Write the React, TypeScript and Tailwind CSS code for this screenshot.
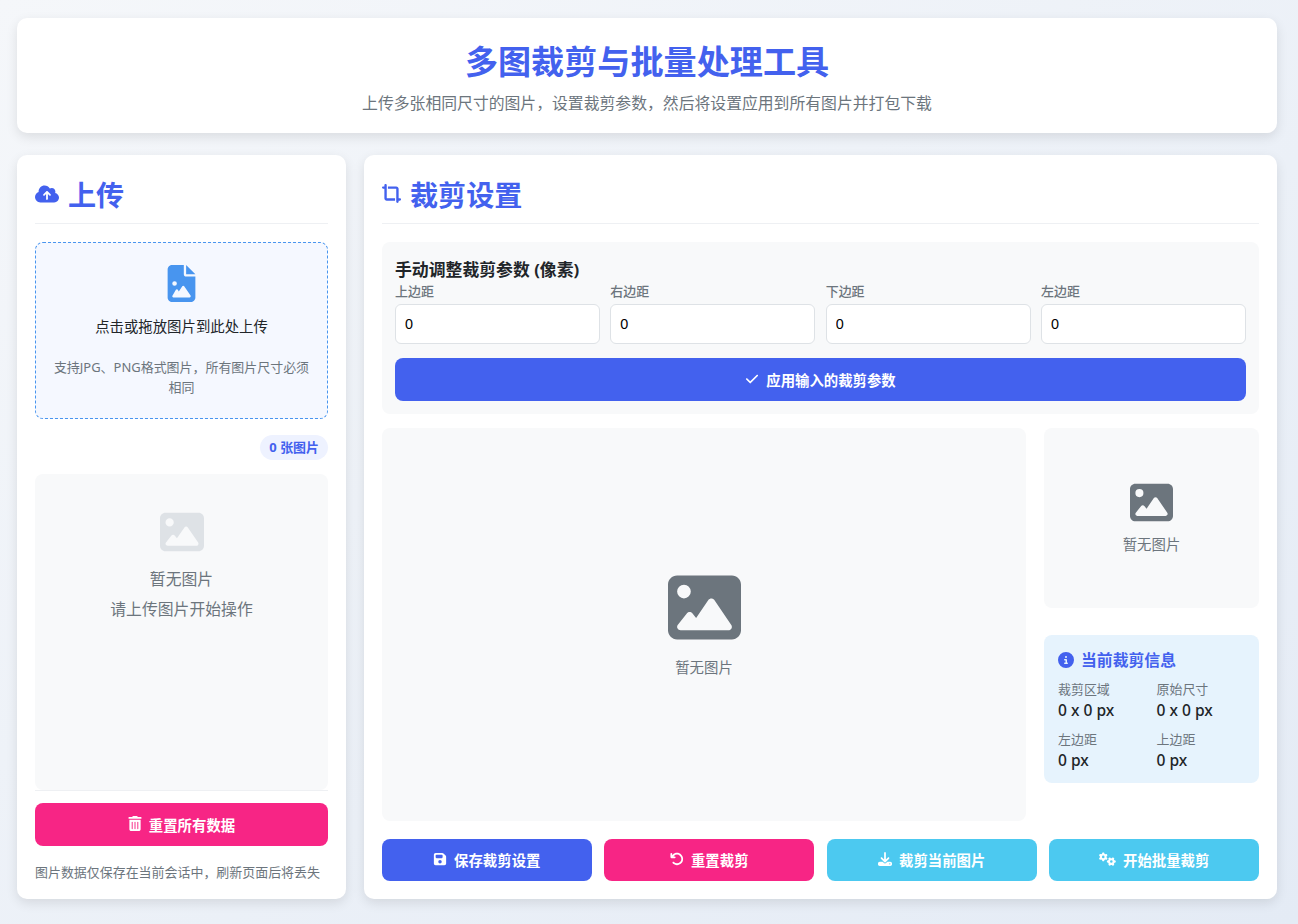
import { FaArrowRotateLeft, FaCheck, FaCircleInfo, FaCloudArrowUp, FaCropSimple, FaDownload, FaFileImage, FaFloppyDisk, FaGears, FaImage, FaTrashCan } from "react-icons/fa6"
import type { ReactNode } from "react"

const font = "font-['Noto_Sans','Noto_Sans_CJK_SC',sans-serif]"

function Button({ color, icon, children }: { color: string; icon: ReactNode; children: ReactNode }) {
  return (
    <button className={`flex items-center justify-center gap-[7px] rounded-lg text-white font-bold text-[14.4px] ${color}`}>
      {icon}
      <span className="pt-[2px]">{children}</span>
    </button>
  )
}

function Field({ label }: { label: string }) {
  return (
    <div className="flex flex-col">
      <label className="text-[12.96px] leading-[18px] text-[#6c757d] font-medium mb-[4px]">{label}</label>
      <input
        readOnly
        value="0"
        className="h-10 w-full rounded-md border border-[#dee2e6] bg-white px-[9px] text-[14.4px] text-black font-['Liberation_Sans',sans-serif]"
      />
    </div>
  )
}

function InfoItem({ label, value }: { label: string; value: string }) {
  return (
    <div>
      <div className="text-[12.96px] leading-[18px] text-[#6c757d]">{label}</div>
      <div className="mt-[1px] text-[15.6px] leading-[23px] font-medium text-[#212529]">{value}</div>
    </div>
  )
}

export default function App() {
  return (
    <div className={`h-[924px] flex flex-col gap-[22px] pl-[17px] pr-[21px] pt-[18px] pb-[25px] bg-gradient-to-br from-[#f5f7fa] to-[#e4ebf5] ${font}`}>
      <header className="h-[115px] shrink-0 flex flex-col items-center rounded-[10px] bg-white shadow-[0_4px_12px_rgba(0,0,0,0.1)]">
        <h1 className="mt-[20px] text-[33.12px] leading-[48px] font-bold text-[#4361ee]">多图裁剪与批量处理工具</h1>
        <p className="mt-[5px] text-[15.84px] leading-[24px] text-[#6c757d]">上传多张相同尺寸的图片，设置裁剪参数，然后将设置应用到所有图片并打包下载</p>
      </header>

      <main className="flex-1 flex gap-[18px] min-h-0">
        {/* Left column */}
        <section className="w-[329px] shrink-0 flex flex-col rounded-[10px] bg-white p-[18px] pb-0 shadow-[0_4px_12px_rgba(0,0,0,0.1)]">
          <h2 className="h-[51px] flex items-start gap-[9px] border-b border-[#eef0f3] text-[28.08px] leading-[44px] font-bold text-[#4361ee]">
            <FaCloudArrowUp className="w-[24px] h-[24px] mt-[9px]" />
            上传
          </h2>
          <div className="mt-[18px] h-[177px] shrink-0 flex flex-col items-center rounded-lg border border-dashed border-[#4895ef] bg-[#f5f8ff] px-[15px] text-center">
            <FaFileImage className="mt-[22px] w-[37px] h-[37px] text-[#4895ef]" />
            <p className="mt-[14px] text-[14.4px] leading-[21px] text-[#212529]">点击或拖放图片到此处上传</p>
            <p className="mt-[20px] text-[12.96px] leading-[20px] text-[#6c757d]">支持JPG、PNG格式图片，所有图片尺寸必须相同</p>
          </div>
          <div className="mt-[16px] self-end h-[25px] flex items-center rounded-full bg-[#eef2ff] px-[9px] text-[12.96px] font-bold text-[#4361ee]">0 张图片</div>
          <div className="mt-[14px] flex-1 flex flex-col items-center rounded-lg bg-[#f8f9fa] text-[#6c757d]">
            <FaImage className="mt-[36px] w-[44px] h-[44px] text-[#dee2e6]" />
            <p className="mt-[13px] text-[15.84px] leading-[24px]">暂无图片</p>
            <p className="mt-[6px] text-[15.84px] leading-[24px]">请上传图片开始操作</p>
          </div>
          <div className="border-t border-[#eef0f3] pt-[12px] flex flex-col">
            <Button color="h-[43px] bg-[#f72585]" icon={<FaTrashCan className="w-[14px] h-[15px] mb-[3px]" />}>重置所有数据</Button>
            <p className="mt-[16px] mb-[17px] text-[12.96px] leading-[20px] text-[#6c757d]">图片数据仅保存在当前会话中，刷新页面后将丢失</p>
          </div>
        </section>

        {/* Right column */}
        <section className="flex-1 min-w-0 flex flex-col rounded-[10px] bg-white p-[18px] shadow-[0_4px_12px_rgba(0,0,0,0.1)]">
          <h2 className="h-[51px] shrink-0 flex items-start gap-[9px] border-b border-[#eef0f3] text-[28.08px] leading-[44px] font-bold text-[#4361ee]">
            <FaCropSimple className="w-[19px] h-[19px] mt-[11px]" />
            裁剪设置
          </h2>

          <div className="mt-[18px] h-[172px] shrink-0 rounded-lg bg-[#f8f9fa] p-[13px] pt-[16px]">
            <h3 className="text-[16.85px] leading-[24px] font-bold text-[#212529]">手动调整裁剪参数 (像素)</h3>
            <div className="grid grid-cols-4 gap-[10.4px]">
              <Field label="上边距" />
              <Field label="右边距" />
              <Field label="下边距" />
              <Field label="左边距" />
            </div>
            <Button color="mt-[14px] w-full h-[43px] bg-[#4361ee]" icon={<FaCheck className="w-[14px] h-[14px] mb-[2px]" />}>应用输入的裁剪参数</Button>
          </div>

          <div className="mt-[14px] flex-1 min-h-0 flex gap-[18px]">
            <div className="w-[644px] flex flex-col items-center justify-center rounded-lg bg-[#f8f9fa] text-[#6c757d]">
              <FaImage className="w-[73px] h-[73px] mb-[13px]" />
              <p className="text-[14.4px] leading-[21px]">暂无图片</p>
            </div>
            <div className="flex-1 flex flex-col">
              <div className="h-[180px] flex flex-col items-center justify-center rounded-lg bg-[#f8f9fa] text-[#6c757d]">
                <FaImage className="w-[43px] h-[43px] mb-[10px]" />
                <p className="text-[14.4px] leading-[21px]">暂无图片</p>
              </div>
              <div className="mt-[27px] h-[148px] rounded-lg bg-[#e6f3fd] p-[14px]">
                <h4 className="flex items-center gap-[7px] text-[15.84px] leading-[22px] font-bold text-[#4361ee]">
                  <FaCircleInfo className="w-[16px] h-[16px]" />
                  当前裁剪信息
                </h4>
                <div className="mt-[9px] grid grid-cols-2 gap-x-[10px] gap-y-[8px]">
                  <InfoItem label="裁剪区域" value="0 x 0 px" />
                  <InfoItem label="原始尺寸" value="0 x 0 px" />
                  <InfoItem label="左边距" value="0 px" />
                  <InfoItem label="上边距" value="0 px" />
                </div>
              </div>
            </div>
          </div>

          <div className="mt-[18px] h-[42px] shrink-0 grid grid-cols-4 gap-[12.96px]">
            <Button color="bg-[#4361ee]" icon={<FaFloppyDisk className="w-[14px] h-[14px] mb-[3px]" />}>保存裁剪设置</Button>
            <Button color="bg-[#f72585]" icon={<FaArrowRotateLeft className="w-[14px] h-[14px] mb-[3px]" />}>重置裁剪</Button>
            <Button color="bg-[#4cc9f0]" icon={<FaDownload className="w-[14px] h-[14px] mb-[3px]" />}>裁剪当前图片</Button>
            <Button color="bg-[#4cc9f0]" icon={<FaGears className="w-[17px] h-[14px] mb-[3px]" />}>开始批量裁剪</Button>
          </div>
        </section>
      </main>
    </div>
  )
}
